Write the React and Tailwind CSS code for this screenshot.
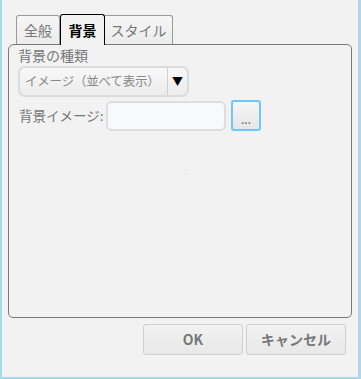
export default function App() {
  const font = { fontFamily: '"Noto Sans CJK JP", "Liberation Sans", sans-serif' };
  return (
    <div
      className="w-[361px] h-[379px] bg-[#f2f2f2] border-l-2 border-r-[3px] border-b-2 border-[#a9d8e8] flex flex-col pl-[6px] pr-[6px] pt-[13px]"
      style={font}
    >
      <div className="flex items-end pl-[8px] h-[31px] relative z-10">
        <div className="w-[44px] h-[29px] border border-b-0 border-[#9a9a9a] rounded-tl-[3px] rounded-tr-[3px] flex items-center justify-center text-[14px] text-[#777] bg-[linear-gradient(#f6f6f6,#ececec)]">
          全般
        </div>
        <div className="w-[45px] h-[31px] border border-b-0 border-black rounded-tl-[3px] rounded-tr-[3px] flex items-center justify-center text-[14px] font-bold text-black bg-[#f2f2f2] -mb-px">
          背景
        </div>
        <div className="w-[68px] h-[29px] border border-b-0 border-l-0 border-[#9a9a9a] rounded-tr-[3px] flex items-center justify-center text-[14px] text-[#777] bg-[linear-gradient(#f6f6f6,#ececec)]">
          スタイル
        </div>
      </div>
      <div className="h-[274px] border border-[#7a7a7a] rounded-[5px] rounded-tl-[6px] pl-[9px] pt-[1px] flex flex-col">
        <div className="text-[14px] leading-[18px] text-[#777]">背景の種類</div>
        <div className="mt-[2px] w-[171px] h-[31px] border-2 border-[#dcdcdc] rounded-[7px] bg-[linear-gradient(#f8f8f8,#ececec)] flex items-center">
          <div className="flex-1 pl-[5px] text-[12.5px] text-[#888] h-full flex items-center border-r border-[#cfcfcf] tracking-[-0.2px]">
            イメージ（並べて表示）
          </div>
          <div className="w-[19px] flex items-center justify-center text-[11px] text-black">▼</div>
        </div>
        <div className="flex items-center mt-[3px]">
          <div className="w-[88px] pl-[1px] text-[13.5px] text-[#777]">背景イメージ:</div>
          <div className="w-[120px] h-[30px] border-2 border-[#dedede] rounded-[6px] bg-[#f8f9fd]"></div>
          <div className="ml-[5px] w-[30px] h-[31px] border-2 border-[#6cc8ff] rounded-[3px] bg-[linear-gradient(#f6f6f6,#e6e6e6)] flex items-end justify-center pb-[4px] text-[12px] leading-[12px] text-[#666]">
            ...
          </div>
        </div>
        <div className="flex justify-center mt-[38px] pl-[4px]">
          <div className="w-[1px] h-[1px] bg-[#ccc]"></div>
        </div>
      </div>
      <div className="flex justify-end gap-[3px] mt-[6px] pr-[6px]">
        <div className="w-[100px] h-[31px] border border-[#d0d0d0] rounded-[3px] bg-[linear-gradient(#f2f2f2,#e8e8e8)] flex items-center justify-center text-[14px] font-bold text-[#777]">
          OK
        </div>
        <div className="w-[100px] h-[31px] border border-[#d0d0d0] rounded-[3px] bg-[linear-gradient(#f2f2f2,#e8e8e8)] flex items-center justify-center text-[14px] font-bold text-[#777]">
          キャンセル
        </div>
      </div>
    </div>
  );
}
